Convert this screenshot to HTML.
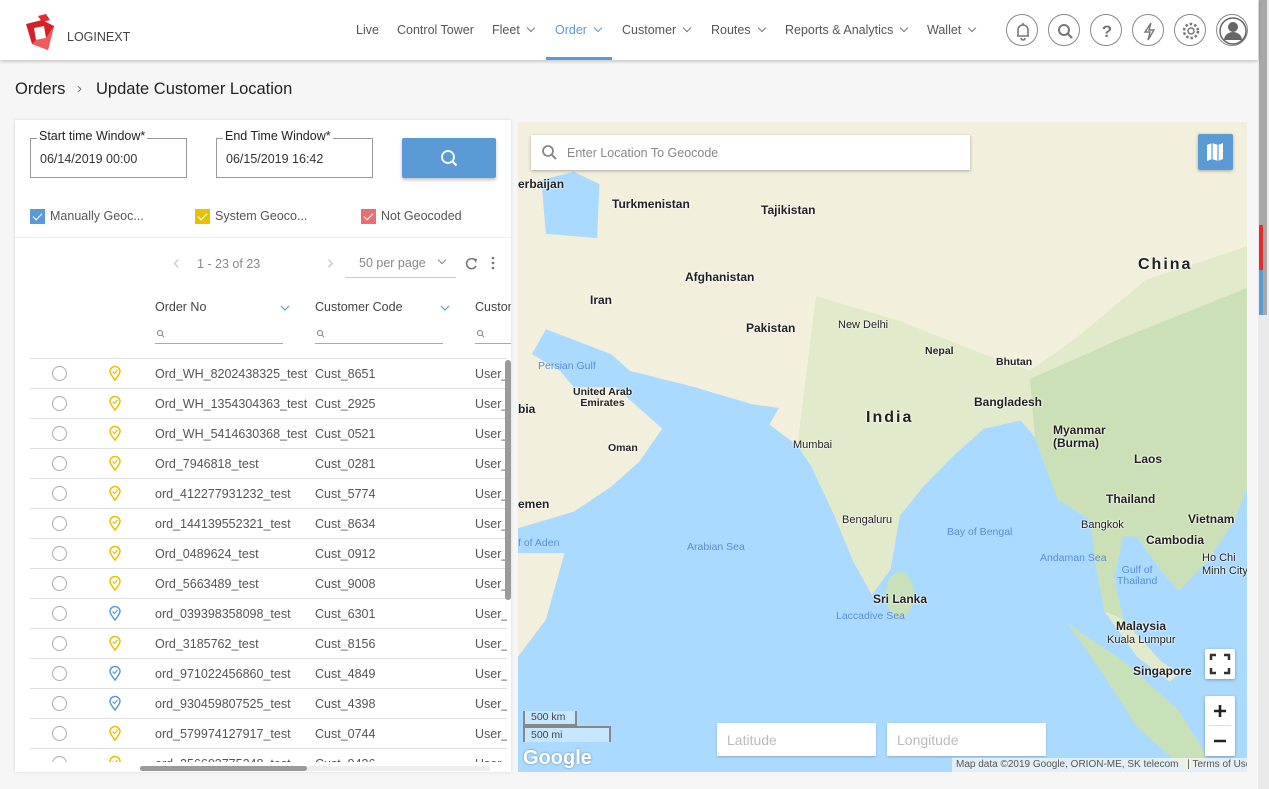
<!DOCTYPE html>
<html><head><meta charset="utf-8"><style>
*{box-sizing:border-box;margin:0;padding:0}
body{width:1269px;height:789px;overflow:hidden;background:#f6f6f6;font-family:"Liberation Sans",sans-serif;position:relative;color:#333}
.hdr{position:absolute;left:0;top:0;width:1258px;height:60px;background:#fff;box-shadow:0 1px 4px rgba(0,0,0,.25);z-index:5}
.nav{position:absolute;top:23px;font-size:12.5px;color:#555}
.nav .c{display:inline-block;width:6px;height:6px;border-right:1px solid #777;border-bottom:1px solid #777;transform:rotate(45deg);margin-left:8px;position:relative;top:-3px}
.ic{position:absolute;top:14px;width:32px;height:32px;border:1px solid #888;border-radius:50%}
.ic svg{position:absolute;left:0;top:0}
.abs{position:absolute}
.panel{position:absolute;left:15px;top:120px;width:496px;height:652px;background:#fff;box-shadow:0 0 3px rgba(0,0,0,.12);overflow:hidden}
.fld{position:absolute;top:18px;width:157px;height:40px;border:1px solid #999;font-size:12.5px;color:#333;padding:13px 0 0 9px}
.fld span{position:absolute;top:-10px;left:6px;background:#fff;padding:0 2px;font-size:12.5px;color:#222}
.cb{position:absolute;top:89px;width:15px;height:15px}
.cb:after{content:"";position:absolute;left:5px;top:2px;width:4px;height:8px;border-right:1.5px solid #fff;border-bottom:1.5px solid #fff;transform:rotate(45deg)}
.cbl{position:absolute;top:89px;font-size:12.5px;color:#555}
.row{position:absolute;left:30px;width:477px;height:30px;border-top:1px solid #e0e0e0;font-size:12.5px;color:#555;white-space:nowrap}
.row .r{position:absolute;left:22px;top:7px;width:15px;height:15px;border:1px solid #aaa;border-radius:50%}
.row .t{position:absolute;top:8px}
.row svg{position:absolute;left:78px;top:6px}
.map{position:absolute;left:518px;top:122px;width:729px;height:650px;background:#aadaff;overflow:hidden}
.lb{position:absolute;font-size:12px;font-weight:bold;color:#222;text-shadow:0 0 2px #fff,0 0 2px #fff;white-space:nowrap;line-height:13px}
.lb.s{font-weight:normal;font-size:11px;color:#222}
.lb.w{font-weight:normal;font-size:10.5px;color:#5b8ed6;text-shadow:none}
.lb.b{font-size:16px;letter-spacing:2px}
.box{position:absolute;background:#fff;box-shadow:0 1px 3px rgba(0,0,0,.3)}
</style></head><body>
<div class="hdr">
 <svg class="abs" style="left:24px;top:14px" width="38" height="36" viewBox="0 0 38 36"><path d="M14 2 L22 0 L26 6 L18 8Z" fill="#e32b2f"/><path d="M2 10 L18 6 L30 12 L24 36 L8 30Z" fill="#d42027"/><path d="M10 14 L20 12 L22 24 L12 26Z" fill="#fff"/><path d="M8 30 L24 36 L30 12 L22 24 L12 26Z" fill="#f05a5f"/></svg>
 <div class="abs" style="left:67px;top:30px;font-size:12.5px;color:#444">LOGINEXT</div>
 <div class="nav" style="left:356px">Live</div>
 <div class="nav" style="left:397px">Control Tower</div>
 <div class="nav" style="left:492px">Fleet<i class="c"></i></div>
 <div class="nav" style="left:555px;color:#5a9bd6">Order<i class="c" style="border-color:#5a9bd6"></i></div>
 <div class="abs" style="left:546px;top:57px;width:66px;height:3px;background:#5a9bd6"></div>
 <div class="nav" style="left:622px">Customer<i class="c"></i></div>
 <div class="nav" style="left:711px">Routes<i class="c"></i></div>
 <div class="nav" style="left:785px">Reports &amp; Analytics<i class="c"></i></div>
 <div class="nav" style="left:927px">Wallet<i class="c"></i></div>
 <div class="ic" style="left:1006px"><svg width="32" height="32"><path d="M10 21h12M11 21v-6a5 5 0 0110 0v6M14 23a2 2 0 004 0M16 8v2" stroke="#777" stroke-width="1.6" fill="none"/></svg></div>
 <div class="ic" style="left:1048px"><svg width="32" height="32"><circle cx="15" cy="15" r="5" stroke="#777" stroke-width="2" fill="none"/><path d="M19 19l4 4" stroke="#777" stroke-width="2.2"/></svg></div>
 <div class="ic" style="left:1090px"><svg width="32" height="32"><text x="16" y="22" text-anchor="middle" font-size="17" font-weight="bold" fill="#777" font-family="Liberation Sans">?</text></svg></div>
 <div class="ic" style="left:1132px"><svg width="32" height="32"><path d="M18 8l-6 9h5l-2 8 6-10h-5z" stroke="#777" stroke-width="1.4" fill="none"/></svg></div>
 <div class="ic" style="left:1174px"><svg width="32" height="32"><circle cx="16" cy="16" r="3" stroke="#777" stroke-width="1.5" fill="none"/><circle cx="16" cy="16" r="7" stroke="#777" stroke-width="2.5" fill="none" stroke-dasharray="2.5 2"/></svg></div>
 <div class="ic" style="left:1216px"><svg width="32" height="32"><circle cx="16" cy="16" r="13" fill="#fff" stroke="#666" stroke-width="1.5"/><circle cx="16" cy="12" r="5" fill="#666"/><path d="M7 25a9 8 0 0118 0z" fill="#666"/></svg></div>
</div>
<div class="abs" style="left:1258px;top:0;width:11px;height:789px;background:#eaeaea"></div>
<div class="abs" style="left:1259px;top:0;width:8px;height:315px;background:#a8a8a8"></div>
<div class="abs" style="left:1259px;top:225px;width:4px;height:45px;background:#e42b2f"></div>
<div class="abs" style="left:1259px;top:270px;width:4px;height:45px;background:#5a9bd6"></div>
<div class="abs" style="left:15px;top:80px;font-size:16.5px;color:#222">Orders</div>
<div class="abs" style="left:77px;top:80px;font-size:15px;color:#777">›</div>
<div class="abs" style="left:96px;top:80px;font-size:16.5px;color:#222">Update Customer Location</div>

<div class="panel">
 <div class="fld" style="left:15px">06/14/2019 00:00<span>Start time Window*</span></div>
 <div class="fld" style="left:201px">06/15/2019 16:42<span>End Time Window*</span></div>
 <div class="abs" style="left:387px;top:18px;width:94px;height:40px;background:#5a9bd6;border-radius:2px;box-shadow:0 2px 3px rgba(0,0,0,.25)"><svg width="94" height="40"><circle cx="46" cy="19" r="6" stroke="#fff" stroke-width="1.8" fill="none"/><path d="M50.5 23.5l4 4" stroke="#fff" stroke-width="2"/></svg></div>
 <div class="cb" style="left:15px;background:#5a9bd6"></div><div class="cbl" style="left:35px">Manually Geoc...</div>
 <div class="cb" style="left:180px;background:#e6c200"></div><div class="cbl" style="left:200px">System Geoco...</div>
 <div class="cb" style="left:346px;background:#e87070"></div><div class="cbl" style="left:366px">Not Geocoded</div>
 <div class="abs" style="left:0;top:117px;width:496px;height:1px;background:#eee"></div>
 <div class="abs" style="left:158px;top:132px;font-size:20px;color:#ccc">‹</div>
 <div class="abs" style="left:182px;top:137px;font-size:12.5px;color:#888">1 - 23 of 23</div>
 <div class="abs" style="left:312px;top:132px;font-size:20px;color:#ccc">›</div>
 <div class="abs" style="left:344px;top:136px;font-size:12.5px;color:#888">50 per page</div>
 <div class="abs" style="left:424px;top:137px;width:6px;height:6px;border-right:1px solid #888;border-bottom:1px solid #888;transform:rotate(45deg)"></div>
 <div class="abs" style="left:330px;top:157px;width:111px;height:1px;background:#ccc"></div>
 <svg class="abs" style="left:448px;top:134px" width="40" height="18"><path d="M12.5 6.5A5 5 0 1 0 13 12" stroke="#777" stroke-width="1.6" fill="none"/><path d="M10 4l4 1-1 4z" fill="#777"/><circle cx="30" cy="4" r="1.3" fill="#777"/><circle cx="30" cy="9" r="1.3" fill="#777"/><circle cx="30" cy="14" r="1.3" fill="#777"/></svg>
 <div class="abs" style="left:140px;top:180px;font-size:12.5px;color:#444">Order No</div>
 <div class="abs" style="left:300px;top:180px;font-size:12.5px;color:#444">Customer Code</div>
 <div class="abs" style="left:460px;top:180px;font-size:12.5px;color:#444">Custom</div>
 <svg class="abs" style="left:264px;top:184px" width="12" height="8"><path d="M2 2l4 4 4-4" stroke="#5a9bd6" fill="none" stroke-width="1.2"/></svg>
 <svg class="abs" style="left:424px;top:184px" width="12" height="8"><path d="M2 2l4 4 4-4" stroke="#5a9bd6" fill="none" stroke-width="1.2"/></svg>
 <div class="abs" style="left:140px;top:223px;width:128px;height:1px;background:#aaa"></div>
 <div class="abs" style="left:300px;top:223px;width:128px;height:1px;background:#aaa"></div>
 <div class="abs" style="left:460px;top:223px;width:40px;height:1px;background:#aaa"></div>
 <svg class="abs" style="left:140px;top:209px" width="400" height="10"><g stroke="#888" fill="none" stroke-width="1"><circle cx="5" cy="4" r="2.6"/><path d="M7 6l2 2"/><circle cx="165" cy="4" r="2.6"/><path d="M167 6l2 2"/><circle cx="325" cy="4" r="2.6"/><path d="M327 6l2 2"/></g></svg>
</div>
<div id="rows"></div>
<div class="abs" style="left:505px;top:360px;width:6px;height:240px;background:#9a9a9a;border-radius:3px"></div>
<div class="abs" style="left:140px;top:766px;width:350px;height:5px;background:#eee"></div>
<div class="abs" style="left:140px;top:766px;width:167px;height:5px;background:#9a9a9a;border-radius:3px"></div>

<div class="map">
 <svg class="abs" style="left:0;top:0" width="729" height="650" viewBox="0 0 1566 1568" preserveAspectRatio="none">
  <path d="M0 0H1566V880L1540 960 1480 1060 1420 1130 1380 1080 1330 1000 1300 1000 1280 1100 1300 1200 1380 1300 1420 1330 1400 1350 1330 1290 1260 1180 1240 1060 1230 960 1160 910 1110 760 1080 720 1000 740 940 800 870 880 820 950 800 1080 760 1140 720 1060 680 950 630 830 600 780 540 730 560 690 500 680 380 640 240 600 200 560 60 500 30 560 90 600 120 640 210 640 250 680 310 740 260 820 200 880 120 940 0 980Z" fill="#f3efdd"/>
  <path d="M0 1040H100L60 1200 0 1290Z" fill="#f3efdd"/>
  <path d="M1180 1210 1300 1300 1420 1420 1480 1530 1440 1568 1330 1460 1250 1320Z" fill="#c9e1b9"/>
  <ellipse cx="820" cy="1140" rx="30" ry="55" fill="#c9e1b9"/>
  <path d="M50 140 120 120 175 150 170 280 60 270Z" fill="#aadaff"/>
  <path d="M640 420 820 480 1000 560 1100 600 1200 520 1350 380 1566 300V880L1540 960 1480 1060 1420 1130 1380 1080 1330 1000 1300 1000 1280 1100 1300 1200 1380 1300 1420 1330 1400 1350 1330 1290 1260 1180 1240 1060 1230 960 1160 910 1110 760 1080 720 1000 740 940 800 870 880 820 950 800 1080 760 1140 720 1060 680 950 630 830 600 780 620 600Z" fill="#dde8c8" opacity=".8"/>
  <path d="M1100 620 1300 520 1566 400V880L1540 960 1480 1060 1420 1130 1380 1080 1330 1000 1300 1000 1280 1100 1300 1200 1260 1180 1240 1060 1230 960 1160 910 1110 760Z" fill="#c5ddb2" opacity=".8"/>
 </svg>
 <div class="lb" style="left:0;top:56px">erbaijan</div>
 <div class="lb" style="left:94px;top:76px">Turkmenistan</div>
 <div class="lb" style="left:243px;top:82px">Tajikistan</div>
 <div class="lb" style="left:167px;top:149px">Afghanistan</div>
 <div class="lb" style="left:72px;top:172px">Iran</div>
 <div class="lb" style="left:228px;top:200px">Pakistan</div>
 <div class="lb s" style="left:320px;top:197px">New Delhi</div>
 <div class="lb" style="left:407px;top:223px;font-size:10.5px">Nepal</div>
 <div class="lb" style="left:478px;top:234px;font-size:10.5px">Bhutan</div>
 <div class="lb b" style="left:620px;top:136px">China</div>
 <div class="lb b" style="left:348px;top:289px">India</div>
 <div class="lb" style="left:456px;top:274px">Bangladesh</div>
 <div class="lb" style="left:535px;top:302px">Myanmar<br>(Burma)</div>
 <div class="lb" style="left:616px;top:331px">Laos</div>
 <div class="lb" style="left:588px;top:371px">Thailand</div>
 <div class="lb" style="left:670px;top:391px">Vietnam</div>
 <div class="lb" style="left:628px;top:412px">Cambodia</div>
 <div class="lb s" style="left:563px;top:397px">Bangkok</div>
 <div class="lb s" style="left:684px;top:430px">Ho Chi<br>Minh City</div>
 <div class="lb w" style="left:20px;top:238px">Persian Gulf</div>
 <div class="lb" style="left:55px;top:265px;font-size:10.5px;line-height:11px;text-align:center">United Arab<br>Emirates</div>
 <div class="lb" style="left:90px;top:320px;font-size:10.5px">Oman</div>
 <div class="lb" style="left:0;top:281px">bia</div>
 <div class="lb" style="left:0;top:376px">emen</div>
 <div class="lb w" style="left:0;top:415px">f of Aden</div>
 <div class="lb w" style="left:169px;top:419px">Arabian Sea</div>
 <div class="lb s" style="left:275px;top:317px">Mumbai</div>
 <div class="lb s" style="left:324px;top:392px">Bengaluru</div>
 <div class="lb w" style="left:429px;top:404px">Bay of Bengal</div>
 <div class="lb w" style="left:522px;top:430px">Andaman Sea</div>
 <div class="lb w" style="left:599px;top:443px;line-height:11px;text-align:center">Gulf of<br>Thailand</div>
 <div class="lb" style="left:355px;top:471px">Sri Lanka</div>
 <div class="lb w" style="left:318px;top:488px">Laccadive Sea</div>
 <div class="lb" style="left:598px;top:498px">Malaysia</div>
 <div class="lb s" style="left:589px;top:512px">Kuala Lumpur</div>
 <div class="lb" style="left:615px;top:543px">Singapore</div>
 <div class="lb s" style="left:690px;top:620px">Jaka</div>
 <div class="box" style="left:13px;top:13px;width:439px;height:35px"><svg class="abs" style="left:10px;top:9px" width="18" height="18"><circle cx="7" cy="7" r="5" stroke="#888" stroke-width="1.8" fill="none"/><path d="M11 11l4 4" stroke="#888" stroke-width="2"/></svg><div class="abs" style="left:36px;top:11px;font-size:12.5px;color:#888">Enter Location To Geocode</div></div>
 <div class="abs" style="left:680px;top:12px;width:35px;height:36px;background:#5a9bd6;border-radius:2px;box-shadow:0 1px 3px rgba(0,0,0,.3)"><svg width="35" height="36"><path d="M9 11l5-2 6 2 5-2v16l-5 2-6-2-5 2z" fill="#fff"/><path d="M14 9v16M20 11v16" stroke="#5a9bd6" stroke-width="1.2"/></svg></div>
 <div class="box" style="left:687px;top:527px;width:30px;height:30px;border-radius:2px"><svg width="30" height="30"><path d="M6 11V6h5M19 6h5v5M24 19v5h-5M11 24H6v-5" stroke="#333" stroke-width="2.5" fill="none"/></svg></div>
 <div class="box" style="left:687px;top:574px;width:30px;height:60px;border-radius:2px"><div class="abs" style="left:4px;top:29px;width:22px;height:1px;background:#ddd"></div><svg width="30" height="60"><path d="M9 15h12M15 9v12M9 45h12" stroke="#222" stroke-width="2.6"/></svg></div>
 <div class="box" style="left:199px;top:601px;width:159px;height:33px;font-size:14px;color:#bbb;padding:9px 0 0 10px;box-shadow:0 1px 2px rgba(0,0,0,.2)">Latitude</div>
 <div class="box" style="left:369px;top:601px;width:159px;height:33px;font-size:14px;color:#bbb;padding:9px 0 0 10px;box-shadow:0 1px 2px rgba(0,0,0,.2)">Longitude</div>
 <div class="abs" style="left:5px;top:589px;width:54px;height:15px;border:2px solid #888;border-top:none;background:rgba(255,255,255,.35);font-size:10.5px;color:#444;padding:0 0 0 6px">500 km</div>
 <div class="abs" style="left:5px;top:604px;width:88px;height:16px;border:2px solid #888;border-bottom:none;background:rgba(255,255,255,.35);font-size:10.5px;color:#444;padding:1px 0 0 6px">500 mi</div>
 <div class="abs" style="left:5px;top:625px;font-size:20px;font-weight:bold;color:#fff;text-shadow:0 0 2px rgba(0,0,0,.4)">Google</div>
 <div class="abs" style="left:434px;top:636px;width:295px;height:14px;background:rgba(245,245,245,.75);font-size:10px;color:#555;padding:1px 0 0 4px;white-space:nowrap">Map data ©2019 Google, ORION-ME, SK telecom <span style="margin-left:6px">| Terms of Use</span></div>
</div>
<script>
var d=[["Ord_WH_8202438325_test","Cust_8651","y"],["Ord_WH_1354304363_test","Cust_2925","y"],["Ord_WH_5414630368_test","Cust_0521","y"],["Ord_7946818_test","Cust_0281","y"],["ord_412277931232_test","Cust_5774","y"],["ord_144139552321_test","Cust_8634","y"],["Ord_0489624_test","Cust_0912","y"],["Ord_5663489_test","Cust_9008","y"],["ord_039398358098_test","Cust_6301","b"],["Ord_3185762_test","Cust_8156","y"],["ord_971022456860_test","Cust_4849","b"],["ord_930459807525_test","Cust_4398","b"],["ord_579974127917_test","Cust_0744","y"],["ord_256603775248_test","Cust_9436","y"]];
var h="";d.forEach(function(r,i){var c=r[2]=="y"?"#e6c200":"#5a9bd6";var top=358+i*30;var hh=i==13?14:30;
h+='<div class="row" style="top:'+top+'px;height:'+hh+'px;overflow:hidden"><div class="r"></div><svg width="14" height="16"><path d="M7 15C3 10 2 8 2 6.5a5 5 0 0110 0C12 8 11 10 7 15z" fill="none" stroke="'+c+'" stroke-width="1.5"/><path d="M4.5 6.5l2 2 3-3.5" fill="none" stroke="'+c+'" stroke-width="1.2"/></svg><div class="t" style="left:125px">'+r[0]+'</div><div class="t" style="left:285px">'+r[1]+'</div><div class="t" style="left:445px">User_</div></div>';});
document.getElementById("rows").innerHTML=h;
</script>
</body></html>
